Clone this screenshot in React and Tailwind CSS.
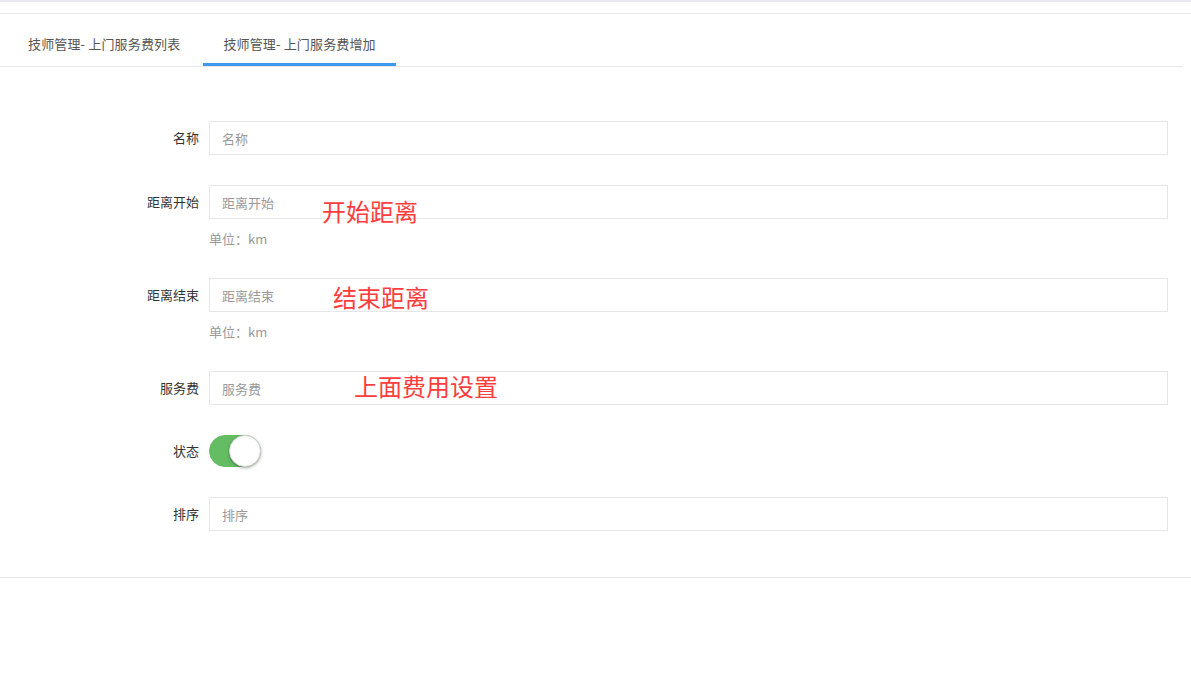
import { useState } from 'react';

const font = { fontFamily: '"Noto Sans CJK SC", "Noto Sans", sans-serif' };

function Field({ label, placeholder, help, note }) {
  return (
    <div className="flex items-start mb-[30px]">
      <label className="w-[199px] shrink-0 text-right text-[13px] text-[#333] leading-[34px]">{label}</label>
      <div className="ml-[10px] flex-1">
        <div className="relative">
          <input
            placeholder={placeholder}
            className="w-full h-[34px] border border-[#e5e6e7] px-3 text-[13px] text-[#333] placeholder:text-[#999] outline-none"
          />
          {note}
        </div>
        {help && <p className="mt-[11px] text-[13px] leading-[18px] text-[#999]">{help}</p>}
      </div>
    </div>
  );
}

function Note({ children, className }) {
  return (
    <span className={`absolute pointer-events-none text-[24px] leading-[24px] text-[#ff3d3d] whitespace-nowrap ${className}`}>
      {children}
    </span>
  );
}

export default function App() {
  const [on, setOn] = useState(true);

  return (
    <div className="min-h-screen bg-white" style={font}>
      <div className="h-[2px] bg-[#e9e9ee]" />
      <div className="h-[12px] border-b border-[#e7e7e7]" />

      {/* Tabs */}
      <div className="mt-[16px] mr-[8px] flex gap-[3px] pl-[8px] border-b border-[#e7e7e7]">
        <div className="px-5 h-[36px] leading-[28px] text-[13px] tracking-[0.15px] text-[#555]">技师管理- 上门服务费列表</div>
        <div className="px-5 h-[36px] leading-[28px] text-[13px] tracking-[0.15px] text-[#555] border-b-[3px] border-[#3d98ee] -mb-px">技师管理- 上门服务费增加</div>
      </div>

      {/* Form */}
      <div className="pt-[54px] pr-[23px] pb-[16px] border-b border-[#e7e7e7]">
        <Field label="名称" placeholder="名称" />
        <Field
          label="距离开始"
          placeholder="距离开始"
          help="单位：km"
          note={<Note className="left-[113px] top-[14px]">开始距离</Note>}
        />
        <Field
          label="距离结束"
          placeholder="距离结束"
          help="单位：km"
          note={<Note className="left-[124px] top-[7px]">结束距离</Note>}
        />
        <Field
          label="服务费"
          placeholder="服务费"
          note={<Note className="left-[145px] top-[3px]">上面费用设置</Note>}
        />

        <div className="flex items-center mb-[30px]">
          <label className="w-[199px] shrink-0 text-right text-[13px] text-[#333]">状态</label>
          <button
            onClick={() => setOn(!on)}
            className={`ml-[10px] relative w-[52px] h-[32px] rounded-full border ${on ? 'bg-[#64bd63] border-[#64bd63]' : 'bg-white border-[#dfdfdf]'}`}
          >
            <span
              className={`absolute top-[-1px] w-[32px] h-[32px] rounded-full bg-white border border-[#d5d5d5] shadow-[0_1px_3px_rgba(0,0,0,0.35)] ${on ? 'right-[-1px]' : 'left-[-1px]'}`}
            />
          </button>
        </div>

        <Field label="排序" placeholder="排序" />
      </div>
    </div>
  );
}
